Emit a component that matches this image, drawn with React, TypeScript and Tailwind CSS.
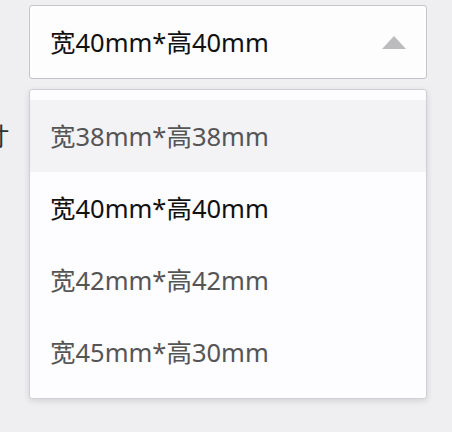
import { useState } from 'react';

const sizes = ['宽38mm*高38mm', '宽40mm*高40mm', '宽42mm*高42mm', '宽45mm*高30mm'];

export default function App() {
  const [selected, setSelected] = useState(1);
  const [hovered] = useState(0);

  return (
    <div
      className="h-[432px] w-[452px] overflow-hidden bg-[#efeff1] pt-[5px]"
      style={{ fontFamily: '"Noto Sans", "Noto Sans CJK SC", sans-serif' }}
    >
      <div className="ml-[29px] w-[398px]">
        <button
          type="button"
          className="flex h-[74px] w-full items-center justify-between rounded-[3px] border border-[#c4c4c8] bg-[#fdfdfe] pl-[20px] pr-[20px] text-[25.5px] text-[#111]"
        >
          <span>{sizes[selected]}</span>
          <svg width="24" height="13" viewBox="0 0 24 13">
            <polygon points="12,0 24,13 0,13" fill="#bcbcbe" />
          </svg>
        </button>
      </div>

      <div className="mt-[10px] flex items-start">
        <div className="-ml-[16px] mt-[28px] w-[45px] text-[25.5px] text-[#333]">寸</div>
        <ul className="w-[398px] rounded-[3px] border border-[#d0d0d4] bg-[#fdfcfe] py-[10px] shadow-[0_2px_6px_rgba(0,0,0,0.12)]">
          {sizes.map((size, i) => (
            <li
              key={size}
              onClick={() => setSelected(i)}
              className={`flex h-[72px] cursor-pointer items-center pl-[20px] text-[25.5px] ${
                i === hovered ? 'bg-[#f3f2f5]' : ''
              } ${i === selected ? 'text-[#111]' : 'text-[#555]'}`}
            >
              {size}
            </li>
          ))}
        </ul>
      </div>
    </div>
  );
}
